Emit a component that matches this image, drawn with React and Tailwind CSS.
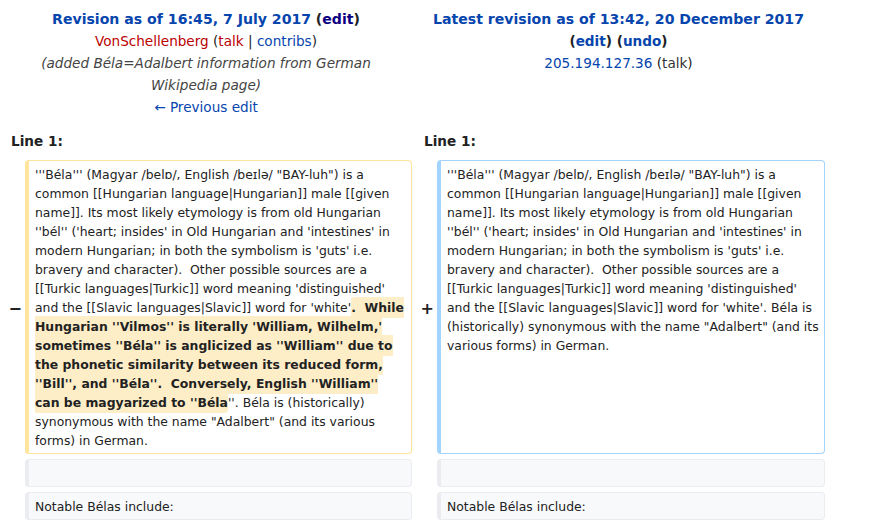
import React from 'react';

const LINK = 'text-[#0645ad]';
const NEW_LINK = 'text-[#ba0000]';

const SHARED = `'''Béla''' (Magyar /belɒ/, English /beɪlə/ "BAY-luh") is a
common [[Hungarian language|Hungarian]] male [[given
name]]. Its most likely etymology is from old Hungarian
''bél'' ('heart; insides' in Old Hungarian and 'intestines' in
modern Hungarian; in both the symbolism is 'guts' i.e.
bravery and character).  Other possible sources are a
[[Turkic languages|Turkic]] word meaning 'distinguished'
`;

const REMOVED = `.  While
Hungarian ''Vilmos'' is literally 'William, Wilhelm,'
sometimes ''Béla'' is anglicized as ''William'' due to
the phonetic similarity between its reduced form,
''Bill'', and ''Béla''.  Conversely, English ''William''
can be magyarized to ''Béla`;

function Marker({ sign }) {
  return (
    <div className="mt-[8px] flex items-center justify-end pr-[3px] pt-[3px] text-[16px] font-bold leading-none">
      {sign}
    </div>
  );
}

function ContextRow({ text }) {
  return (
    <>
      <div />
      <div className="mt-[5px] rounded-[4px] border border-l-4 border-[#eaecf0] bg-[#f8f9fa] px-[6px] py-[3.5px] text-[12.4px] leading-[19px] whitespace-pre">
        {text || <div className="h-[19px]" />}
      </div>
      <div />
      <div className="mt-[5px] rounded-[4px] border border-l-4 border-[#eaecf0] bg-[#f8f9fa] px-[6px] py-[3.5px] text-[12.4px] leading-[19px] whitespace-pre">
        {text || <div className="h-[19px]" />}
      </div>
    </>
  );
}

export default function App() {
  return (
    <div className="min-h-screen bg-white pt-[8px] font-['DejaVu_Sans',sans-serif] text-[#222]">
      <div className="grid grid-cols-[25px_387px_25px_388px]">
        {/* revision headers */}
        <div className="col-span-2 text-center text-[13.6px] leading-[22px]">
          <div className="font-bold">
            <span className={`text-[14.1px] ${LINK}`}>Revision as of 16:45, 7 July 2017</span>{' '}
            <span className="text-[14.1px]">
              (<span className="text-[#0b0080]">edit</span>)
            </span>
          </div>
          <div>
            <span className={NEW_LINK}>VonSchellenberg</span> (<span className={NEW_LINK}>talk</span> | <span className={LINK}>contribs</span>)
          </div>
          <div className="italic text-[#444]">
            (added Béla=Adalbert information from German
            <br />
            Wikipedia page)
          </div>
          <div className={LINK}>← Previous edit</div>
        </div>
        <div className="col-span-2 text-center text-[13.6px] leading-[22px]">
          <div className={`text-[14.1px] font-bold ${LINK}`}>Latest revision as of 13:42, 20 December 2017</div>
          <div className="font-bold">
            (<span className={LINK}>edit</span>) (<span className={LINK}>undo</span>)
          </div>
          <div>
            <span className={LINK}>205.194.127.36</span> (<span className="text-[#333]">talk</span>)
          </div>
        </div>

        {/* line numbers */}
        <div className="col-span-2 mt-[12px] pl-[11px] text-[13.6px] font-bold leading-[22px]">Line 1:</div>
        <div className="col-span-2 mt-[12px] pl-[12px] text-[13.6px] font-bold leading-[22px]">Line 1:</div>

        {/* changed paragraph */}
        <Marker sign="−" />
        <div className="mt-[8px] rounded-[4px] border border-l-4 border-[#ffe49c] px-[6px] py-[3.5px] text-[12.4px] leading-[19px] whitespace-pre">
          {SHARED}
          {"and the [[Slavic languages|Slavic]] word for 'white'"}
          <span className="rounded-[4px] bg-[#feeec8] py-[3px] font-bold">{REMOVED}</span>
          {`''. Béla is (historically)
synonymous with the name "Adalbert" (and its various
forms) in German.`}
        </div>
        <Marker sign="+" />
        <div className="mt-[8px] rounded-[4px] border border-l-4 border-[#a3d3ff] px-[6px] py-[3.5px] text-[12.4px] leading-[19px] whitespace-pre">
          {SHARED}
          {`and the [[Slavic languages|Slavic]] word for 'white'. Béla is
(historically) synonymous with the name "Adalbert" (and its
various forms) in German.`}
        </div>

        {/* context */}
        <ContextRow />
        <ContextRow text="Notable Bélas include:" />
      </div>
    </div>
  );
}
